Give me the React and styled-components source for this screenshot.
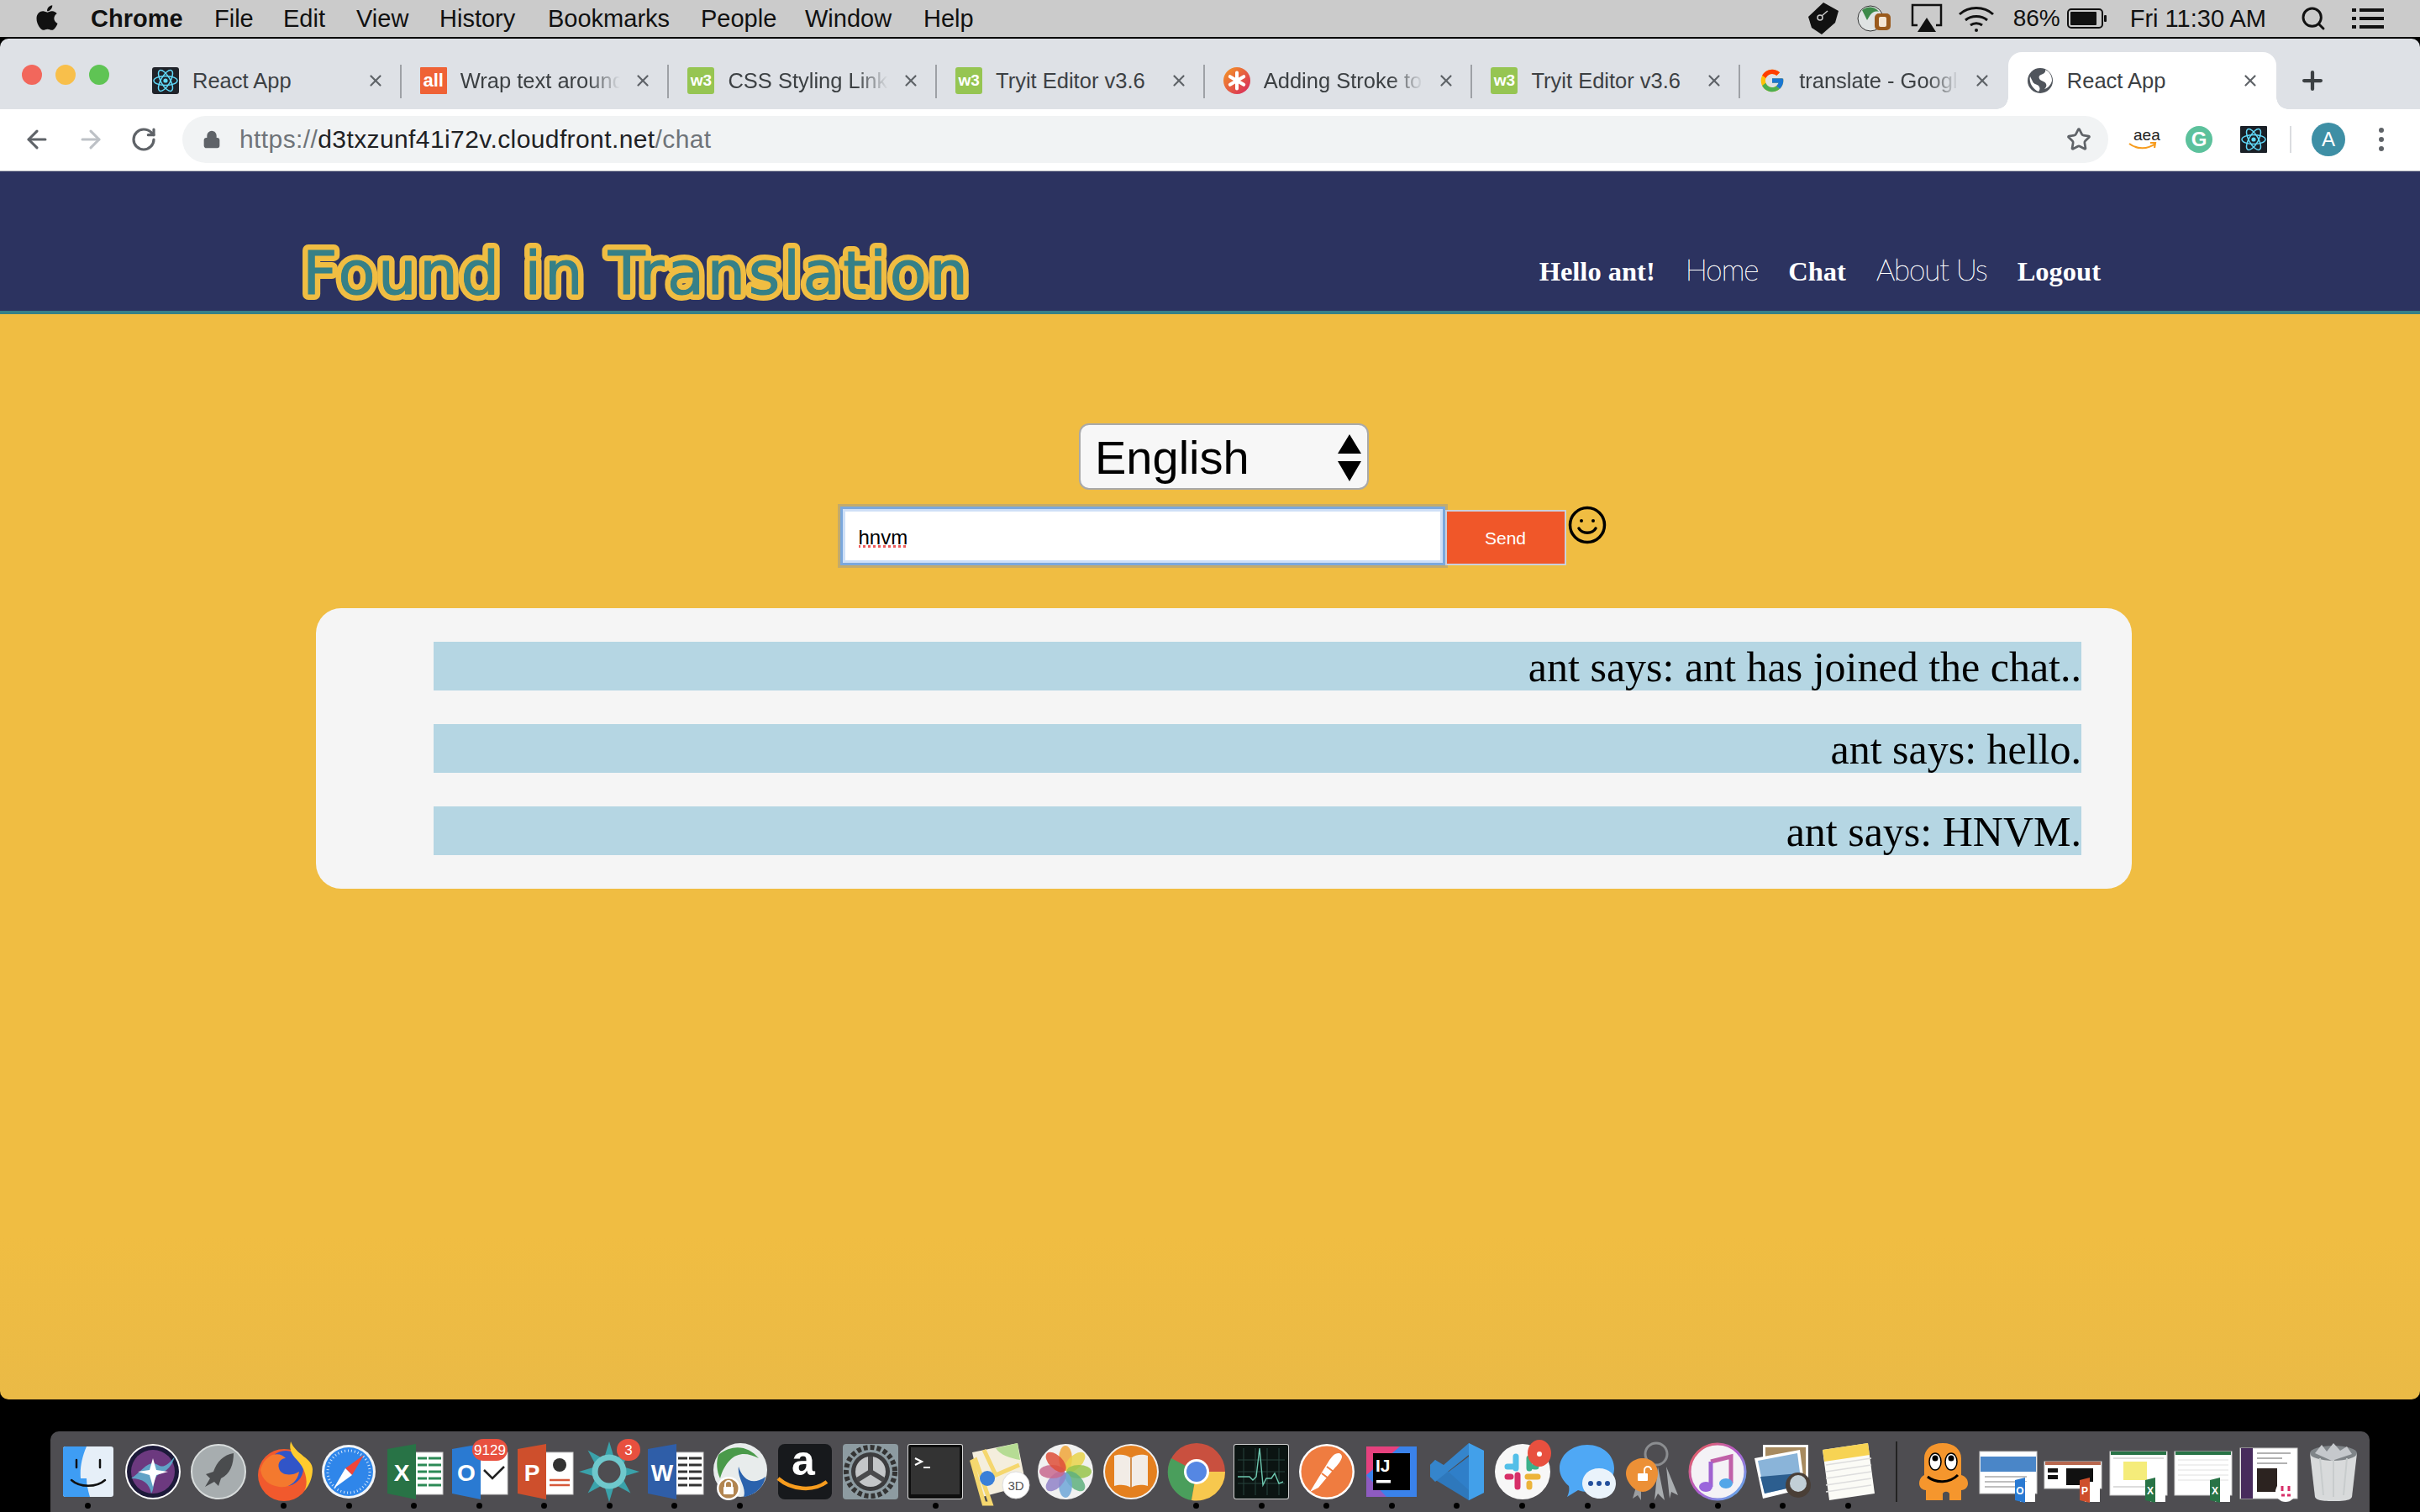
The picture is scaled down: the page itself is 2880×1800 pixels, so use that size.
import React from 'react'
import styled, { createGlobalStyle } from 'styled-components'
import { ArrowLeft, ArrowRight, RotateCw, Lock, Star, Plus, X, Search } from 'lucide-react'
import { FaApple } from 'react-icons/fa'
import { FcGoogle } from 'react-icons/fc'

const GlobalStyle = createGlobalStyle`
  html, body {
    margin: 0;
    padding: 0;
    background: #000;
  }
  * {
    box-sizing: border-box;
  }
`

const Screen = styled.div`
  width: 2880px;
  height: 1800px;
  display: flex;
  flex-direction: column;
  overflow: hidden;
  background: #000;
  font-family: 'Liberation Sans', Arial, sans-serif;
`

/* mac menu bar */
const MenuBar = styled.div`
  height: 46px;
  flex: none;
  display: flex;
  align-items: center;
  background: #cbcbcb;
  border-bottom: 2px solid #000;
  padding: 0 0 0 40px;
  color: #111;
  font-size: 29px;
`

const AppleIcon = styled(FaApple)`
  width: 32px;
  height: 34px;
  margin: -3px 36px 0 0;
`

const MenuItem = styled.span`
  flex: none;
  width: ${(p) => p.$w}px;
  font-weight: ${(p) => (p.$bold ? 700 : 400)};
`

const StatusArea = styled.div`
  margin-left: auto;
  display: flex;
  align-items: center;
  height: 100%;
  padding-right: 43px;
  font-size: 28px;
`

const StatusSlot = styled.span`
  display: flex;
  align-items: center;
  margin-right: ${(p) => p.$gap}px;
  font-size: ${(p) => p.$size || 28}px;
`

/* browser */
const Window = styled.div`
  height: 1620px;
  flex: none;
  display: flex;
  flex-direction: column;
  border-radius: 10px;
  overflow: hidden;
`

const TabStrip = styled.div`
  height: 84px;
  flex: none;
  display: flex;
  align-items: flex-end;
  background: #dee1e6;
  position: relative;
  padding-left: 159px;
`

const Lights = styled.div`
  position: absolute;
  left: 26px;
  top: 31px;
  display: flex;
  gap: 16px;
`

const Light = styled.span`
  width: 24px;
  height: 24px;
  border-radius: 50%;
  background: ${(p) => p.$color};
`

const Tab = styled.div`
  width: ${(p) => (p.$active ? 319 : 318.7)}px;
  height: 68px;
  flex: none;
  position: relative;
  display: flex;
  align-items: center;
  padding: 0 20px 0 ${(p) => (p.$active ? 22 : 22)}px;
  gap: 16px;
  color: #3c4043;
  font-size: 25.5px;
  border-radius: 16px 16px 0 0;
  background: ${(p) => (p.$active ? '#fff' : 'transparent')};
  &::after {
    content: '';
    display: ${(p) => (p.$noDivider ? 'none' : 'block')};
    position: absolute;
    right: 0;
    top: 15px;
    height: 40px;
    width: 2px;
    background: #9ea1a6;
  }
`

/* the little flared corners at the foot of the open tab */
const TabFlare = styled.span`
  position: absolute;
  bottom: 0;
  ${(p) => p.$side}: -14px;
  width: 14px;
  height: 14px;
  background: radial-gradient(
    circle at ${(p) => (p.$side === 'left' ? '0 0' : '100% 0')},
    transparent 13.5px,
    #fff 14px
  );
`

const TabTitle = styled.span`
  flex: 1;
  min-width: 0;
  overflow: hidden;
  white-space: nowrap;
  ${(p) =>
    p.$fade &&
    `
    -webkit-mask-image: linear-gradient(to right, #000 80%, transparent 100%);
    mask-image: linear-gradient(to right, #000 80%, transparent 100%);
  `}
`

const CloseIcon = styled(X)`
  width: 22px;
  height: 22px;
  flex: none;
  color: #5f6368;
`

const NewTab = styled(Plus)`
  width: 34px;
  height: 34px;
  margin: 0 0 17px 26px;
  color: #3c4043;
`

const Favicon = styled.span`
  width: 32px;
  height: 32px;
  flex: none;
  display: flex;
  align-items: center;
  justify-content: center;
  overflow: hidden;
  border-radius: ${(p) => p.$radius || 3}px;
  background: ${(p) => p.$bg || 'transparent'};
  color: #fff;
  font-size: ${(p) => p.$size || 20}px;
  font-weight: 700;
`

const Toolbar = styled.div`
  height: 74px;
  flex: none;
  display: flex;
  align-items: center;
  background: #fff;
  border-bottom: 1px solid #b9bbc0;
  padding: 0 0 2px 27px;
  color: #5f6368;
`

const NavButton = styled.span`
  display: flex;
  width: 64px;
  color: ${(p) => p.$color || '#5f6368'};
`

const Omnibox = styled.div`
  width: 2292px;
  height: 56px;
  margin-left: -2px;
  display: flex;
  align-items: center;
  background: #f1f3f4;
  border-radius: 28px;
  padding: 0 20px 0 24px;
`

const UrlText = styled.span`
  margin-left: 22px;
  font-size: 30px;
  color: #6f7479;
  letter-spacing: 0.4px;
  b {
    font-weight: 400;
    color: #202124;
  }
`

const StarIcon = styled(Star)`
  margin-left: auto;
`

const ExtensionRow = styled.div`
  display: flex;
  align-items: center;
  margin-left: 24px;
`

const ExtSlot = styled.span`
  width: ${(p) => p.$w || 65}px;
  display: flex;
  flex-direction: column;
  align-items: flex-start;
`

const AeaText = styled.span`
  font-size: 19px;
  color: #222;
  line-height: 17px;
  margin-left: 6px;
`

const ToolDivider = styled.span`
  width: 2px;
  height: 32px;
  background: #dadce0;
  margin: 0 24px 0 0;
`

const Avatar = styled.span`
  width: 40px;
  height: 40px;
  border-radius: 50%;
  background: #3e8fa5;
  color: #fff;
  font-size: 24px;
  display: flex;
  align-items: center;
  justify-content: center;
`

const Dots = styled.span`
  display: flex;
  flex-direction: column;
  gap: 5px;
  margin-left: 40px;
  i {
    width: 6px;
    height: 6px;
    border-radius: 50%;
    background: #5f6368;
  }
`

/* the page */
const SiteHeader = styled.header`
  height: 170px;
  flex: none;
  display: flex;
  align-items: flex-end;
  justify-content: space-between;
  background: #2c3360;
  border-bottom: 4px solid #368087;
  padding: 0 380px 28px 345px;
`

const LogoSvg = styled.svg`
  width: 830px;
  height: 100px;
  display: block;
  margin-bottom: -28px;
`

const LogoText = styled.text`
  font-family: 'DejaVu Sans', sans-serif;
  font-size: 72px;
  font-weight: 400;
  fill: #368087;
  stroke: #f0bd42;
  stroke-width: 14px;
  stroke-linejoin: round;
  paint-order: stroke fill;
`

const LogoFill = styled.text`
  font-family: 'DejaVu Sans', sans-serif;
  font-size: 72px;
  fill: #368087;
  stroke: #368087;
  stroke-width: 1px;
`

const Nav = styled.nav`
  display: flex;
  align-items: baseline;
  gap: 36px;
  color: #fff;
`

const NavBold = styled.span`
  font-family: 'Liberation Serif', 'Times New Roman', serif;
  font-weight: 700;
  font-size: 32.5px;
`

const NavThin = styled.span`
  font-family: Lato, sans-serif;
  font-weight: 100;
  font-size: 35px;
  letter-spacing: -1px;
  -webkit-text-stroke: 0.5px #fff;
`

const Content = styled.main`
  flex: 1;
  display: flex;
  flex-direction: column;
  align-items: center;
  padding: 130px 0 0 33px;
  background: linear-gradient(to bottom, #f0bd42 85%, #eaba46 100%);
`

const LangSelect = styled.div`
  width: 345px;
  height: 79px;
  display: flex;
  align-items: center;
  justify-content: space-between;
  padding: 2px 6px 0 17px;
  background: #f7f7f7;
  border: 2px solid #a9a9a9;
  border-radius: 12px;
  color: #000;
  font-size: 56px;
`

const InputRow = styled.form`
  display: flex;
  align-items: flex-start;
  margin: 20px 0 0 -2px;
`

const MessageInput = styled.input`
  width: 720px;
  height: 70px;
  padding: 3px 19px 0;
  background: #fff;
  border: 3px solid #7ba8dd;
  outline: none;
  box-shadow: inset 0 0 0 3px #cfe0f7, 0 0 0 3px rgba(96, 130, 200, 0.3);
  font-family: 'Liberation Sans', Arial, sans-serif;
  font-size: 24px;
  color: #000;
  text-decoration: underline dotted #ee5a5a 3px;
  text-underline-offset: 1px;
`

const SendButton = styled.button`
  width: 144px;
  height: 66px;
  margin-top: 4px;
  padding: 2px 0 0;
  background: #f05729;
  border: 2px solid #cbd0dc;
  color: #fff;
  font-family: 'Liberation Sans', Arial, sans-serif;
  font-size: 21px;
`

const SmileIcon = styled.svg`
  width: 46px;
  height: 46px;
  margin: -1px 0 0 2px;
`

const ChatPanel = styled.section`
  width: 2161px;
  margin-top: 51px;
  padding: 40px 60px 40px 140px;
  display: flex;
  flex-direction: column;
  gap: 40px;
  background: #f5f5f5;
  border-radius: 30px;
`

const ChatLine = styled.div`
  height: 58px;
  line-height: 60px;
  text-align: right;
  background: #b5d6e3;
  color: #000;
  font-family: 'Liberation Serif', 'Times New Roman', serif;
  font-size: 50px;
`

/* dock */
const DockArea = styled.div`
  flex: 1;
  padding: 38px 60px 0;
`

const Dock = styled.div`
  height: 96px;
  display: flex;
  padding-left: 6px;
  background: #4e4d51;
  border-radius: 10px 10px 0 0;
`

const DockItem = styled.div`
  width: 77.58px;
  flex: none;
  position: relative;
  display: flex;
  justify-content: center;
  padding-top: 12px;
  &::after {
    content: '';
    display: ${(p) => (p.$running ? 'block' : 'none')};
    position: absolute;
    left: 50%;
    bottom: 4px;
    width: 7px;
    height: 7px;
    margin-left: -3.5px;
    border-radius: 50%;
    background: #000;
  }
`

const DockDivider = styled.span`
  width: 2px;
  height: 72px;
  margin: 12px 15px 0 18px;
  background: #222;
`

const DockIcon = styled.svg`
  width: 72px;
  height: 72px;
  overflow: visible;
  text {
    font-family: 'Liberation Sans', Arial, sans-serif;
  }
`

const Atom = ({ size = 32, r = 3, bg = '#20232a' }) => (
  <svg width={size} height={size} viewBox="0 0 32 32" style={{ display: 'block' }}>
    <rect width="32" height="32" rx={r} fill={bg} />
    <g fill="none" stroke="#61dafb" strokeWidth="1.5">
      <ellipse cx="16" cy="16" rx="14" ry="5.5" />
      <ellipse cx="16" cy="16" rx="14" ry="5.5" transform="rotate(60 16 16)" />
      <ellipse cx="16" cy="16" rx="14" ry="5.5" transform="rotate(120 16 16)" />
    </g>
    <circle cx="16" cy="16" r="2.6" fill="#61dafb" />
  </svg>
)

const Asterisk = () => (
  <svg width="32" height="32" viewBox="0 0 32 32">
    <defs>
      <linearGradient id="ast" x1="0" x2="1" y1="0" y2="1">
        <stop offset="0" stopColor="#f59a23" />
        <stop offset="1" stopColor="#d6245f" />
      </linearGradient>
    </defs>
    <circle cx="16" cy="16" r="16" fill="url(#ast)" />
    <g stroke="#fff" strokeWidth="4" strokeLinecap="round">
      <path d="M16 6.5v19M7.8 11.2l16.4 9.6M24.2 11.2L7.8 20.8" />
    </g>
  </svg>
)

const GlobeFav = () => (
  <svg width="32" height="32" viewBox="0 0 32 32">
    <circle cx="16" cy="16" r="15" fill="#50555c" />
    <path d="M22 3c1 3-2 5-5 6-3 1-3 4-1 6 3 2 6 2 7 5 1 2 0 4-2 6 4-1 8-5 9-10 0-6-3-11-8-13zM4 11c-1 3 0 8 2 11 2 3 5 6 8 7 2-2 2-5 0-7-3-2-6-2-7-5-1-2-2-4-3-6z" fill="#fff" />
  </svg>
)

const W3Fav = () => (
  <Favicon $bg="#96c552" $size={19}>w3</Favicon>
)

const TABS = [
  { title: 'React App', icon: <Atom /> },
  { title: 'Wrap text around', fade: true, icon: <Favicon $bg="#ef6236" $size={22} $radius={1}>all</Favicon> },
  { title: 'CSS Styling Links', fade: true, icon: <W3Fav /> },
  { title: 'Tryit Editor v3.6', icon: <W3Fav /> },
  { title: 'Adding Stroke to', fade: true, icon: <Asterisk /> },
  { title: 'Tryit Editor v3.6', icon: <W3Fav /> },
  { title: 'translate - Google', fade: true, icon: <FcGoogle size={32} />, noDivider: true },
  { title: 'React App', icon: <GlobeFav />, active: true, noDivider: true },
]

const MENU = [
  { label: 'Chrome', bold: true, w: 147 },
  { label: 'File', w: 82 },
  { label: 'Edit', w: 87 },
  { label: 'View', w: 99 },
  { label: 'History', w: 129 },
  { label: 'Bookmarks', w: 182 },
  { label: 'People', w: 124 },
  { label: 'Window', w: 141 },
  { label: 'Help', w: 70 },
]

const Finder = () => (
  <DockIcon viewBox="0 0 72 72">
    <rect x="6" y="6" width="60" height="60" rx="3" fill="#e6eff8" />
    <path d="M9 6h25c-6 14-8 26-7 38h7c0 8 2 15 4 22H9a3 3 0 0 1-3-3V9a3 3 0 0 1 3-3z" fill="#3e9df4" />
    <path d="M22 22v9M50 22v9" stroke="#111" strokeWidth="2.5" strokeLinecap="round" />
    <path d="M16 46c10 9 30 9 40 0" fill="none" stroke="#111" strokeWidth="2.5" strokeLinecap="round" />
  </DockIcon>
)

const Siri = () => (
  <DockIcon viewBox="0 0 72 72">
    <circle cx="36" cy="36" r="33" fill="#fff" />
    <circle cx="36" cy="36" r="31" fill="#1d1a3a" />
    <circle cx="36" cy="36" r="26" fill="#7a3f8c" opacity=".85" />
    <path d="M10 44c12-8 18-18 26-18s10 12 26-8c-6 20-18 18-22 24-4 6-2 14-6 20-2-12-10-18-24-18z" fill="#5cc6dd" opacity=".75" />
    <path d="M36 20l4 14 14 2-14 4-4 14-4-14-14-4 14-2z" fill="#fff" />
  </DockIcon>
)

const Launchpad = () => (
  <DockIcon viewBox="0 0 72 72">
    <circle cx="36" cy="36" r="32" fill="#a7adaf" />
    <circle cx="36" cy="36" r="32" fill="none" stroke="#d8dcdc" strokeWidth="2" />
    <path d="M54 14c-12 2-20 10-24 22l-9 3 5 5-6 10 11-6 5 5 3-9c11-5 15-17 15-30z" fill="#4a4c4e" />
  </DockIcon>
)

const Firefox = () => (
  <DockIcon viewBox="0 0 72 72">
    <circle cx="36" cy="40" r="31" fill="#f1592d" />
    <circle cx="38" cy="32" r="21" fill="#3155c8" />
    <path d="M8 34c2-8 6-14 14-18 8-2 12 0 16 4-6 0-10 6-8 12 2 8 14 10 24 4-2 12-12 20-24 18C18 52 10 46 8 34z" fill="#f4792e" />
    <path d="M44 0c-3 12 3 17 10 25 9 11 11 26 6 34 6-6 10-16 10-26C70 20 50 16 44 0z" fill="#ffcb2e" />
  </DockIcon>
)

const Safari = () => (
  <DockIcon viewBox="0 0 72 72">
    <circle cx="36" cy="36" r="32" fill="#f2f4f6" />
    <circle cx="36" cy="36" r="29" fill="#2f86ea" />
    <circle cx="36" cy="36" r="25" fill="none" stroke="#cfe4fb" strokeWidth="3" strokeDasharray="1 3" />
    <path d="M54 16L32 32l8 8z" fill="#f0453a" />
    <path d="M18 56l22-16-8-8z" fill="#fff" />
  </DockIcon>
)

const OfficeIcon = ({ color, letter, lines, children }) => (
  <DockIcon viewBox="0 0 72 72">
    <rect x="36" y="13" width="34" height="50" fill="#fff" stroke="#ccc" />
    {lines}
    <path d="M4 9l34-6v66L4 62z" fill={color} />
    <text x="21" y="47" fontSize="28" fontWeight="700" fill="#fff" textAnchor="middle">{letter}</text>
    {children}
  </DockIcon>
)

const gridLines = (c) => (
  <g stroke={c} strokeWidth="3">
    {[20, 28, 36, 44, 52].map((y) => <path key={y} d={`M40 ${y}h28`} />)}
    <path d="M52 15v44" stroke="#fff" strokeWidth="2" />
  </g>
)

const Badge = ({ x, text, w }) => (
  <g>
    <rect x={x} y="-3" width={w} height="26" rx="13" fill="#e8503f" />
    <text x={x + w / 2} y="16" fontSize="17" fill="#fff" textAnchor="middle">{text}</text>
  </g>
)

const Qlik = () => (
  <DockIcon viewBox="0 0 72 72">
    <g fill="#3aa2aa">
      {[0, 45, 90, 135, 180, 225, 270, 315].map((a) => (
        <path key={a} d="M30 20L36 0l6 20z" transform={`rotate(${a} 36 36)`} />
      ))}
    </g>
    <circle cx="36" cy="36" r="17" fill="none" stroke="#6fc8cc" strokeWidth="7" />
    <circle cx="36" cy="36" r="11" fill="#4e4d51" />
    <Badge x={45} w={28} text="3" />
  </DockIcon>
)

const Vpn = () => (
  <DockIcon viewBox="0 0 72 72">
    <circle cx="36" cy="34" r="32" fill="#e8ecec" />
    <path d="M10 16c18-14 36-10 48 4-12-6-24-8-34 2-6 6-10 14-12 22-4-8-5-20-2-28z" fill="#4a9a4a" />
    <path d="M34 30c4 14 16 24 32 12-2 12-12 22-26 24 4-12-8-22-6-36z" fill="#2a62ad" />
    <circle cx="22" cy="56" r="14" fill="#fff" />
    <circle cx="22" cy="56" r="11.5" fill="#b28550" />
    <rect x="16" y="54" width="12" height="9" rx="1" fill="#fff" />
    <path d="M18 54v-3a4 4 0 0 1 8 0v3" fill="none" stroke="#fff" strokeWidth="2" />
  </DockIcon>
)

const Amazon = () => (
  <DockIcon viewBox="0 0 72 72">
    <rect x="4" y="3" width="64" height="66" rx="8" fill="#17191c" />
    <text x="34" y="40" fontSize="50" fill="#fff" textAnchor="middle" fontWeight="700">a</text>
    <path d="M4 44c16 14 42 16 58 4" fill="none" stroke="#f79c1e" strokeWidth="4.5" />
  </DockIcon>
)

const SysPrefs = () => (
  <DockIcon viewBox="0 0 72 72">
    <rect x="3" y="3" width="66" height="66" rx="4" fill="#8d9ba1" />
    <circle cx="36" cy="36" r="29" fill="none" stroke="#333" strokeWidth="6" strokeDasharray="5 3" />
    <circle cx="36" cy="36" r="23" fill="#3c3c3e" />
    <circle cx="36" cy="36" r="18" fill="#c4c6c8" />
    <path d="M36 36V18M36 36L20 46M36 36l16 10" stroke="#4a4a4c" strokeWidth="6" />
  </DockIcon>
)

const Terminal = () => (
  <DockIcon viewBox="0 0 72 72">
    <rect x="3" y="3" width="66" height="66" rx="3" fill="#d7d7d7" />
    <rect x="4" y="4" width="64" height="64" rx="2" fill="#0e0e0e" />
    <rect x="7" y="7" width="58" height="56" fill="#333" />
    <path d="M12 20l8 4-8 4M22 31h8" fill="none" stroke="#fff" strokeWidth="2.2" />
  </DockIcon>
)

const Maps = () => (
  <DockIcon viewBox="0 0 72 72">
    <path d="M2 13l54-11 10 50-52 14z" fill="#f4eedd" />
    <path d="M30 8l26-6 3 20c-12-2-24-6-29-14z" fill="#b6dc94" />
    <path d="M6 22l18 52h-8L2 24zM16 10l14 30 28-12" fill="none" stroke="#f5d76e" strokeWidth="5" />
    <circle cx="20" cy="44" r="9" fill="#3a80d8" />
    <circle cx="54" cy="52" r="16" fill="#fff" stroke="#ddd" />
    <text x="54" y="58" fontSize="15" textAnchor="middle" fill="#555">3D</text>
  </DockIcon>
)

const Photos = () => (
  <DockIcon viewBox="0 0 72 72">
    <circle cx="36" cy="36" r="33" fill="#f1f1f1" />
    {[
      ['#f0a63a', 0], ['#e9d44a', 45], ['#98c44b', 90], ['#5fb07e', 135],
      ['#6fa7d8', 180], ['#9083c8', 225], ['#c8698e', 270], ['#de4f38', 315],
    ].map(([c, a]) => (
      <ellipse key={a} cx="36" cy="20" rx="8" ry="15" fill={c} opacity=".85" transform={`rotate(${a} 36 36)`} />
    ))}
  </DockIcon>
)

const Books = () => (
  <DockIcon viewBox="0 0 72 72">
    <circle cx="36" cy="36" r="33" fill="#f1f1f1" />
    <circle cx="36" cy="36" r="31" fill="#e4801f" />
    <path d="M36 20c-6-5-14-5-20-3v36c6-2 14-2 20 2 6-4 14-4 20-2V17c-6-2-14-2-20 3z" fill="#f2ece6" />
    <path d="M36 20v35" stroke="#c7731f" strokeWidth="1.5" />
  </DockIcon>
)

const Chrome = () => (
  <DockIcon viewBox="0 0 72 72">
    <circle cx="36" cy="36" r="34" fill="#c9503f" />
    <path d="M36 36L6 20a34 34 0 0 0 24 50z" fill="#4a9e5c" />
    <path d="M36 36h34A34 34 0 0 1 30 70z" fill="#f7c84e" />
    <circle cx="36" cy="36" r="15" fill="#fff" />
    <circle cx="36" cy="36" r="12" fill="#5587e3" />
  </DockIcon>
)

const Activity = () => (
  <DockIcon viewBox="0 0 72 72">
    <rect x="3" y="3" width="66" height="66" rx="3" fill="#d0d0d0" />
    <rect x="4" y="4" width="64" height="64" rx="2" fill="#0b1412" />
    <path d="M15 8v56M29 8v56M43 8v56M57 8v56M8 22h56M8 36h56M8 50h56" stroke="#26433d" />
    <path d="M8 42h14l4 4 4-4 4-34 4 44 4-8h6l4-6 5 12 5-2" fill="none" stroke="#6ec8b0" strokeWidth="1.4" />
  </DockIcon>
)

const Postman = () => (
  <DockIcon viewBox="0 0 72 72">
    <circle cx="36" cy="36" r="33" fill="#fff" />
    <circle cx="36" cy="36" r="30.5" fill="#ef7c40" />
    <path d="M50 14c-5 0-8 4-12 10L22 50l-6 10 10-5 20-24c5-5 8-10 8-13 0-2-2-4-4-4z" fill="#fff" />
    <path d="M30 38l8 6M36 30l8 6" stroke="#ef7c40" strokeWidth="2" />
  </DockIcon>
)

const Intellij = () => (
  <DockIcon viewBox="0 0 72 72">
    <rect x="6" y="6" width="60" height="60" fill="#3a82ea" />
    <path d="M6 6h40L6 40z" fill="#e6417e" />
    <path d="M6 40L30 66H6z" fill="#8e5bc0" />
    <rect x="14" y="14" width="44" height="44" fill="#000" />
    <text x="17" y="36" fontSize="21" fontWeight="700" fill="#fff">IJ</text>
    <rect x="18" y="46" width="17" height="3.5" fill="#fff" />
  </DockIcon>
)

const VsCode = () => (
  <DockIcon viewBox="0 0 72 72">
    <path d="M50 2l18 9v50l-18 9-32-28 32-24z" fill="#2f7fc9" />
    <path d="M50 2l18 9v50l-18 9z" fill="#42a0ea" />
    <path d="M4 28l6-6 40 36v12L4 42z" fill="#2e78bc" />
    <path d="M4 42l6 6L50 16V2L20 28 10 22l-6 6z" fill="#3585cc" />
  </DockIcon>
)

const Slack = () => (
  <DockIcon viewBox="0 0 72 72">
    <circle cx="36" cy="36" r="33" fill="#f7f7f7" />
    <g strokeWidth="7" strokeLinecap="round" fill="none">
      <path d="M28 18v14M18 30h8" stroke="#53bfe8" />
      <path d="M44 20v12M52 30h-2" stroke="#3cb18a" />
      <path d="M42 42h12M44 50v4" stroke="#ecb43a" />
      <path d="M30 40v14M18 42h4" stroke="#d72f68" />
    </g>
    <ellipse cx="56" cy="14" rx="14" ry="16" fill="#e8503f" />
    <circle cx="56" cy="15" r="3" fill="#fff" />
  </DockIcon>
)

const Messages = () => (
  <DockIcon viewBox="0 0 72 72">
    <path d="M36 4c18 0 32 12 32 28 0 16-14 28-32 28-4 0-8-1-11-2l-13 8c2-4 3-9 2-13C7 47 3 40 3 32 3 16 18 4 36 4z" fill="#4fa8f5" />
    <path d="M50 32c12 0 20 8 20 18s-8 18-20 18c-10 0-20-8-20-18s8-18 20-18z" fill="#eaf3fb" />
    <circle cx="40" cy="50" r="3" fill="#234f9c" />
    <circle cx="50" cy="50" r="3" fill="#234f9c" />
    <circle cx="60" cy="50" r="3" fill="#234f9c" />
  </DockIcon>
)

const Keychain = () => (
  <DockIcon viewBox="0 0 72 72">
    <circle cx="40" cy="15" r="13" fill="none" stroke="#8b8d90" strokeWidth="3" />
    <path d="M42 30l8 40-8-8-4 8zM52 30l14 34-8-4-2 8z" fill="#a9adb0" />
    <path d="M22 34l-10 34 6-4 4 6z" fill="#9b9ea1" />
    <path d="M24 20c11 0 18 8 18 18s-8 22-18 22S4 48 4 38s9-18 20-18z" fill="#ec9036" />
    <rect x="18" y="38" width="12" height="9" rx="1" fill="#fff" />
    <path d="M26 38v-4a4 4 0 0 1 8 0" fill="none" stroke="#fff" strokeWidth="2" />
  </DockIcon>
)

const Itunes = () => (
  <DockIcon viewBox="0 0 72 72">
    <defs>
      <linearGradient id="itn" x1="0" x2="1" y1="0" y2="1">
        <stop offset="0" stopColor="#f0604e" />
        <stop offset=".5" stopColor="#b05cd0" />
        <stop offset="1" stopColor="#53b9f0" />
      </linearGradient>
    </defs>
    <circle cx="36" cy="36" r="33" fill="#f4f2f6" stroke="url(#itn)" strokeWidth="3" />
    <path d="M28 24l24-6v32" fill="none" stroke="#c060a8" strokeWidth="5" />
    <path d="M28 24v30" stroke="#a062d0" strokeWidth="5" />
    <ellipse cx="22" cy="54" rx="8" ry="6" fill="#9a66dc" />
    <ellipse cx="46" cy="50" rx="8" ry="6" fill="#54a6e8" />
  </DockIcon>
)

const Preview = () => (
  <DockIcon viewBox="0 0 72 72">
    <rect x="12" y="4" width="54" height="46" fill="#fff" />
    <rect x="15" y="7" width="48" height="40" fill="#a78a5f" />
    <path d="M2 20l54-10 6 46-50 12z" fill="#fff" />
    <path d="M6 23l47-9 5 38-44 10z" fill="#8ab4d9" />
    <path d="M9 42l46-4 3 14-44 10z" fill="#2c5e8f" />
    <circle cx="54" cy="52" r="15" fill="#4a3f37" />
    <circle cx="54" cy="50" r="10" fill="#c2cfd6" />
  </DockIcon>
)

const Notes = () => (
  <DockIcon viewBox="0 0 72 72">
    <path d="M6 10l54-8 8 60-54 8z" fill="#fbfbf6" />
    <path d="M6 10l54-8 2 14-54 8z" fill="#f7d353" />
    <g stroke="#ddd" strokeWidth="1.5">
      {[28, 36, 44, 52, 60].map((y) => <path key={y} d={`M10 ${y}l54-8`} />)}
    </g>
  </DockIcon>
)

const Peccy = () => (
  <DockIcon viewBox="0 0 72 72">
    <path d="M14 20c0-10 8-18 22-18s22 8 22 18v20c6 2 8 6 8 10s-3 8-8 8v12H44v-8c-2-3-6-3-8 0v8H16V58c-5 0-8-4-8-8s2-8 6-10z" fill="#f5962d" />
    <ellipse cx="27" cy="24" rx="7" ry="10" fill="#fff" stroke="#000" strokeWidth="1.5" />
    <ellipse cx="46" cy="24" rx="7" ry="10" fill="#fff" stroke="#000" strokeWidth="1.5" />
    <circle cx="27" cy="20" r="3.5" fill="#000" />
    <circle cx="46" cy="20" r="3.5" fill="#000" />
    <path d="M18 42c10 8 26 8 36-2" fill="none" stroke="#000" strokeWidth="3" />
  </DockIcon>
)

const Thumb = ({ top, h, children, badge }) => (
  <DockIcon viewBox="0 0 72 72">
    <rect x="2" y={top} width="68" height={h} fill="#fff" stroke="#ccc" />
    {children}
    {badge}
  </DockIcon>
)

const miniOffice = (color, letter) => (
  <g>
    <rect x="50" y="48" width="18" height="24" fill="#fff" />
    <path d="M44 46l12-3v30l-12-3z" fill={color} />
    <text x="50" y="63" fontSize="12" fontWeight="700" fill="#fff" textAnchor="middle">{letter}</text>
  </g>
)

const Trash = () => (
  <DockIcon viewBox="0 0 72 72">
    <path d="M8 14h56l-6 52c-1 3-5 5-22 5s-21-2-22-5z" fill="#dfe2e3" opacity=".95" />
    <ellipse cx="36" cy="14" rx="28" ry="9" fill="#7f8488" />
    <path d="M14 14l8-10 6 8 8-10 8 9 8-5 6 9-24 8z" fill="#c5c8cc" />
    <path d="M20 20l4 44M36 22v44M52 20l-4 44" stroke="#c8cccd" strokeWidth="2" />
  </DockIcon>
)

const DOCK_LEFT = [
  [Finder, true], [Siri], [Launchpad], [Firefox, true], [Safari, true],
  [() => <OfficeIcon color="#287346" letter="X" lines={gridLines('#2c8a56')} />, true],
  [() => (
    <OfficeIcon color="#2a7ad2" letter="O" lines={<path d="M42 34l10 10 14-14" fill="none" stroke="#222" strokeWidth="2.5" />}>
      <Badge x={28} w={42} text="9129" />
    </OfficeIcon>
  ), true],
  [() => <OfficeIcon color="#ce4f2c" letter="P" lines={<g><circle cx="54" cy="28" r="8" fill="#333" /><path d="M42 46h24M42 52h24" stroke="#d6593a" strokeWidth="2.5" /></g>} />, true],
  [Qlik, true],
  [() => <OfficeIcon color="#2f5ea8" letter="W" lines={gridLines('#333')} />, true],
  [Vpn, true], [Amazon], [SysPrefs], [Terminal, true], [Maps], [Photos], [Books],
  [Chrome, true], [Activity, true], [Postman, true], [Intellij, true], [VsCode, true],
  [Slack, true], [Messages, true], [Keychain, true], [Itunes, true], [Preview, true], [Notes, true],
]

const DOCK_RIGHT = [
  Peccy,
  () => (
    <Thumb top={12} h={50} badge={miniOffice('#2a7ad2', 'O')}>
      <rect x="3" y="18" width="66" height="18" fill="#4a86c8" />
      <path d="M8 42h50M8 48h50M8 54h40" stroke="#aaa" strokeWidth="1.5" />
    </Thumb>
  ),
  () => (
    <Thumb top={24} h={32} badge={miniOffice('#ce4f2c', 'P')}>
      <rect x="3" y="24" width="66" height="4" fill="#b8674e" />
      <rect x="28" y="32" width="32" height="20" fill="#111" />
      <rect x="6" y="32" width="12" height="5" fill="#111" />
      <rect x="6" y="40" width="12" height="5" fill="#111" />
    </Thumb>
  ),
  () => (
    <Thumb top={12} h={52} badge={miniOffice('#287346', 'X')}>
      <rect x="3" y="12" width="66" height="4" fill="#287346" />
      <rect x="18" y="24" width="28" height="22" fill="#f5ec7a" />
      <path d="M6 20h60M6 54h40" stroke="#bbb" />
    </Thumb>
  ),
  () => (
    <Thumb top={12} h={52} badge={miniOffice('#287346', 'X')}>
      <rect x="3" y="12" width="66" height="4" fill="#287346" />
      <path d="M6 22h60M6 28h60M6 34h60M6 40h60M6 46h60" stroke="#e0e0e0" />
    </Thumb>
  ),
  () => (
    <Thumb top={8} h={60}>
      <rect x="3" y="8" width="14" height="60" fill="#472b5c" />
      <rect x="22" y="32" width="24" height="28" fill="#2c2320" />
      <path d="M22 14h40M22 20h30M22 26h36" stroke="#999" strokeWidth="1.5" />
      <circle cx="56" cy="60" r="12" fill="#fff" />
      <path d="M52 53v6M60 53v6M51 64h4M58 64h4" stroke="#d72f68" strokeWidth="3" />
    </Thumb>
  ),
  Trash,
]

const WifiIcon = () => (
  <svg width="44" height="34" viewBox="0 0 44 34" fill="none" stroke="#111" strokeWidth="3">
    <path d="M2 12c11-10 29-10 40 0M9 19c7-6 19-6 26 0M15 25c4-3 10-3 14 0" />
    <circle cx="22" cy="31" r="2" fill="#111" stroke="none" />
  </svg>
)

const AirplayIcon = () => (
  <svg width="38" height="36" viewBox="0 0 38 36" fill="none">
    <path d="M8 26H2V2h34v24h-6" stroke="#111" strokeWidth="2.5" />
    <path d="M19 17l11 17H8z" fill="#111" />
  </svg>
)

const WalletIcon = () => (
  <svg width="40" height="40" viewBox="0 0 40 40">
    <path d="M2 18L20 1l18 10-4 14-16 14-12-8z" fill="#111" />
    <circle cx="16" cy="19" r="3" fill="none" stroke="#ccc" strokeWidth="1.5" />
    <path d="M18 17l7-6" stroke="#ccc" strokeWidth="1.5" />
  </svg>
)

const VpnStatusIcon = () => (
  <svg width="42" height="36" viewBox="0 0 42 36">
    <circle cx="16" cy="18" r="15" fill="#dfe3e3" stroke="#333" />
    <path d="M6 8c8-6 16-4 20 2-8-2-10 4-14 10z" fill="#3d8a4a" />
    <rect x="21" y="12" width="19" height="20" rx="5" fill="#9a5a1c" />
    <rect x="26" y="16" width="9" height="12" rx="2" fill="#f4e6d4" />
  </svg>
)

const BatteryIcon = () => (
  <svg width="48" height="24" viewBox="0 0 48 24">
    <rect x="1" y="1" width="41" height="22" rx="4" fill="none" stroke="#111" strokeWidth="2" />
    <rect x="4" y="4" width="31" height="16" rx="1" fill="#111" />
    <rect x="44" y="8" width="3" height="8" rx="1" fill="#111" />
  </svg>
)

const ListIcon = () => (
  <svg width="38" height="24" viewBox="0 0 38 24" fill="#111">
    <rect x="0" y="0" width="5" height="4" />
    <rect x="9" y="0" width="29" height="4" />
    <rect x="0" y="10" width="5" height="4" />
    <rect x="9" y="10" width="29" height="4" />
    <rect x="0" y="20" width="5" height="4" />
    <rect x="9" y="20" width="29" height="4" />
  </svg>
)

const GrammarlyIcon = () => (
  <svg width="32" height="32" viewBox="0 0 32 32">
    <circle cx="16" cy="16" r="16" fill="#5cc19c" />
    <text x="16" y="24" fontSize="24" fontWeight="700" fill="#fff" textAnchor="middle" fontFamily="Liberation Sans">G</text>
  </svg>
)

const App = () => (
  <Screen>
    <GlobalStyle />
    <MenuBar>
      <AppleIcon />
      {MENU.map((m) => (
        <MenuItem key={m.label} $bold={m.bold} $w={m.w}>{m.label}</MenuItem>
      ))}
      <StatusArea>
        <StatusSlot $gap={20}><WalletIcon /></StatusSlot>
        <StatusSlot $gap={22}><VpnStatusIcon /></StatusSlot>
        <StatusSlot $gap={18}><AirplayIcon /></StatusSlot>
        <StatusSlot $gap={22}><WifiIcon /></StatusSlot>
        <StatusSlot $gap={8}>86%</StatusSlot>
        <StatusSlot $gap={27}><BatteryIcon /></StatusSlot>
        <StatusSlot $gap={40} $size={29}>Fri 11:30 AM</StatusSlot>
        <StatusSlot $gap={30}><Search size={32} strokeWidth={2.2} /></StatusSlot>
        <StatusSlot $gap={0}><ListIcon /></StatusSlot>
      </StatusArea>
    </MenuBar>

    <Window>
      <TabStrip>
        <Lights>
          <Light $color="#f2675c" />
          <Light $color="#f8bf4b" />
          <Light $color="#5fc454" />
        </Lights>
        {TABS.map((t, i) => (
          <Tab key={i} $active={t.active} $noDivider={t.noDivider}>
            {t.active && <TabFlare $side="left" />}
            {t.active && <TabFlare $side="right" />}
            {t.icon}
            <TabTitle $fade={t.fade}>{t.title}</TabTitle>
            <CloseIcon strokeWidth={2.4} />
          </Tab>
        ))}
        <NewTab strokeWidth={3} />
      </TabStrip>

      <Toolbar>
        <NavButton><ArrowLeft size={34} strokeWidth={2.2} /></NavButton>
        <NavButton $color="#bdc1c6"><ArrowRight size={34} strokeWidth={2.2} /></NavButton>
        <NavButton><RotateCw size={32} strokeWidth={2.4} /></NavButton>
        <Omnibox>
          <Lock size={22} fill="#5f6368" color="#5f6368" strokeWidth={2.4} />
          <UrlText>https://<b>d3txzunf41i72v.cloudfront.net</b>/chat</UrlText>
          <StarIcon size={30} strokeWidth={2.2} />
        </Omnibox>
        <ExtensionRow>
          <ExtSlot $w={68}>
            <AeaText>aea</AeaText>
            <svg width="34" height="10" viewBox="0 0 34 10" fill="none" stroke="#f79c1e" strokeWidth="2.2">
              <path d="M1 2c9 7 22 7 31 0M26 1l6 0-1 6" />
            </svg>
          </ExtSlot>
          <ExtSlot><GrammarlyIcon /></ExtSlot>
          <ExtSlot $w={59}><Atom r={1} bg="#1a2027" /></ExtSlot>
          <ToolDivider />
          <Avatar>A</Avatar>
          <Dots><i /><i /><i /></Dots>
        </ExtensionRow>
      </Toolbar>

      <SiteHeader>
        <LogoSvg viewBox="0 0 830 100">
          <LogoText x="15" y="80" textLength="792" lengthAdjust="spacing">Found in Translation</LogoText>
          <LogoFill x="15" y="80" textLength="792" lengthAdjust="spacing">Found in Translation</LogoFill>
        </LogoSvg>
        <Nav>
          <NavBold>Hello ant!</NavBold>
          <NavThin>Home</NavThin>
          <NavBold>Chat</NavBold>
          <NavThin>About Us</NavThin>
          <NavBold>Logout</NavBold>
        </Nav>
      </SiteHeader>

      <Content>
        <LangSelect>
          English
          <svg width="30" height="56" viewBox="0 0 30 56">
            <path d="M15 0l14 23H1zM15 56L1 32h28z" fill="#000" />
          </svg>
        </LangSelect>
        <InputRow onSubmit={(e) => e.preventDefault()}>
          <MessageInput defaultValue="hnvm" />
          <SendButton type="submit">Send</SendButton>
          <SmileIcon viewBox="0 0 46 46" fill="none" stroke="#000" strokeWidth="3.5">
            <circle cx="23" cy="23" r="20.5" />
            <circle cx="16" cy="18" r="2" fill="#000" stroke="none" />
            <circle cx="30" cy="18" r="2" fill="#000" stroke="none" />
            <path d="M13 27c4 7 16 7 20 0" strokeLinecap="round" />
          </SmileIcon>
        </InputRow>
        <ChatPanel>
          <ChatLine>ant says: ant has joined the chat..</ChatLine>
          <ChatLine>ant says: hello.</ChatLine>
          <ChatLine>ant says: HNVM.</ChatLine>
        </ChatPanel>
      </Content>
    </Window>

    <DockArea>
      <Dock>
        {DOCK_LEFT.map(([Icon, running], i) => (
          <DockItem key={i} $running={running}><Icon /></DockItem>
        ))}
        <DockDivider />
        {DOCK_RIGHT.map((Icon, i) => (
          <DockItem key={i}><Icon /></DockItem>
        ))}
      </Dock>
    </DockArea>
  </Screen>
)

export default App
